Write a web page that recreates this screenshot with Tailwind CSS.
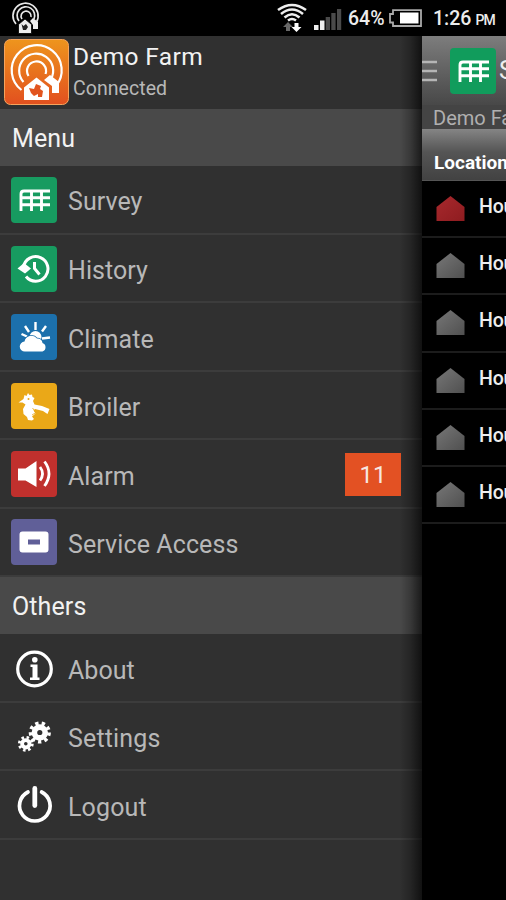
<!DOCTYPE html>
<html lang="en">
<head>
<meta charset="utf-8">
<title>Demo Farm</title>
<script src="https://cdn.jsdelivr.net/npm/@tailwindcss/browser@4"></script>
</head>
<body class="bg-black">
<svg width="0" height="0" class="absolute">
  <defs>
    <linearGradient id="or" x1="0" y1="0" x2="0" y2="1"><stop offset="0" stop-color="#ee951d"/><stop offset="1" stop-color="#e2501f"/></linearGradient>
    <linearGradient id="gy" x1="0" y1="0" x2="1" y2="1"><stop offset="0" stop-color="#777"/><stop offset="1" stop-color="#505050"/></linearGradient>
    <linearGradient id="rd" x1="0" y1="0" x2="1" y2="1"><stop offset="0" stop-color="#a8292d"/><stop offset="1" stop-color="#8e1c20"/></linearGradient>
    <symbol id="grid" viewBox="0 0 46 46"><path d="M10 34V17q0-3 3-3H39M10 20.800H39M10 27.800H39M20.500 14V34M30.500 14V34" fill="none" stroke="#fff" stroke-width="2.900"/></symbol>
    <symbol id="house" viewBox="0 0 28 25"><path d="M14 0L28 11V25H0V11Z"/></symbol>
  </defs>
</svg>
<div class="w-[506px] h-[900px] overflow-hidden bg-black flex flex-col font-['Roboto','Liberation_Sans',sans-serif]">
  <header class="h-[36px] shrink-0 flex items-center text-[#ececec]">
    <svg class="ml-[11px] w-[30px] h-[36px]" viewBox="0 0 30 36" fill="none" stroke="#e8e8e8">
      <path d="M5 24A12.600 12.600 0 1 1 25.500 22M8 21A8.800 8.800 0 1 1 23 19M11 19A5 5 0 1 1 20 17" stroke-width="1.700"/>
      <path d="M19 21L22 18 27 22V29H22V25Z" fill="#eee" stroke="none"/>
      <path d="M7.500 24.500L14 19 20.500 24.500V33.500H7.500Z" fill="#eee" stroke="#000" stroke-width=".8"/>
      <path d="M10.500 24L12.500 26 15 24 17 27 15 30H12Z" fill="#222" stroke="none"/>
    </svg>
    <svg class="ml-[235px] w-[32px] h-[36px]" viewBox="0 0 32 36" fill="none" stroke="#eee" stroke-width="2.600">
      <path d="M2 10Q16 0 30 10M5 14Q16 5 27 14M8.500 17.500Q16 11 23.500 17.500M12 20.500Q16 17.500 20 20.500"/>
      <path d="M12 22L17 27H14V31H10V27H7Z" fill="#686868" stroke="none"/>
      <path d="M20.500 32L15.500 27H18.500V23H22.500V27H25.500Z" fill="#fff" stroke="none"/>
    </svg>
    <svg class="ml-[4px] w-[30px] h-[36px]" viewBox="0 0 30 36"><path d="M2 25h4.500v5H2zM8 20.500h4.500V30H8z" fill="#f0f0f0"/><path d="M13.700 17h4.300v13h-4.300zM19.300 13h4.300v17h-4.300zM25 9h4.200v21H25z" fill="#4a4a4a"/></svg>
    <span class="ml-[6px] pt-[2px] w-[38px] whitespace-nowrap text-[19.500px] font-medium">64%</span>
    <svg class="ml-[1px] w-[36px] h-[36px]" viewBox="0 0 36 36"><path d="M6 10.200H34V26H6V22.500H3V14H6Z" fill="none" stroke="#aaa" stroke-width="1.800"/><rect x="13" y="12.500" width="18.500" height="11" fill="#fff"/></svg>
    <span class="ml-[10px] pt-[2px] whitespace-nowrap text-[19.500px] font-medium">1:26<span class="ml-[4px] text-[14px] tracking-[-.8px]">PM</span></span>
  </header>
  <div class="flex flex-1 min-h-0">
    <aside class="relative w-[422px] shrink-0 bg-[#303030] text-[25px] tracking-[.05px] text-[#b8b8b8]">
      <div class="h-[73px] flex items-start pl-[4px]">
        <svg class="mt-[3px] w-[65px] h-[66px] shrink-0" viewBox="0 0 65 66" fill="none" stroke="#fff">
          <rect x=".5" y=".5" width="64" height="65" rx="6" fill="url(#or)" stroke="#f6a35c"/>
          <path d="M17.500 51A25 25 0 1 1 52 47M19.500 43A17 17 0 1 1 47 40M24.500 37A9.500 9.500 0 1 1 41.500 35" stroke-width="2.200"/>
          <path d="M40 41L46 36 55 43V54H48V47Z" fill="#fff" stroke="none"/>
          <path d="M20 48.500L32.500 38.500 45 48.500V61H20Z" fill="#fff" stroke="none"/>
          <path d="M25 49L30 50 32 45 37 47 36 50 39 52 38 58H34V55L30 57 27 54Z" fill="#e2551f" stroke="none"/>
        </svg>
        <div class="ml-[4px] flex flex-col">
          <span class="mt-[5px] h-[32px] leading-[32px] text-[24.500px] tracking-[.35px] text-[#f2f2f2]">Demo Farm</span>
          <span class="h-[30px] leading-[32px] text-[19.500px] tracking-[.05px]">Connected</span>
        </div>
      </div>
      <h2 class="h-[57px] bg-[#494949] pl-[12px] leading-[60px] tracking-[.1px] text-[#f2f2f2]">Menu</h2>
      <nav>
        <div class="h-[68.500px] flex items-center gap-[11px] pl-[11px] pt-[1px] border-b-2 border-[#3c3c3c]">
          <svg class="w-[46px] h-[46px] rounded-[4px] bg-[#179b60]"><use href="#grid"/></svg><span class="pt-[4px]">Survey</span>
        </div>
        <div class="h-[68.500px] flex items-center gap-[11px] pl-[11px] pt-[2px] border-b-2 border-[#3c3c3c]">
          <svg class="w-[46px] h-[46px] rounded-[4px] bg-[#179b60]" viewBox="0 0 46 46" fill="none" stroke="#fff" stroke-width="3"><path d="M12.500 21A12.300 12.300 0 1 1 15 30.500"/><path d="M6.500 22.500L13 17 20 22.500 14 27.500Z" fill="#fff" stroke="none"/><path d="M23.500 16V22.500L28.500 28.500"/></svg><span class="pt-[4px]">History</span>
        </div>
        <div class="h-[68.500px] flex items-center gap-[11px] pl-[11px] pt-[2px] border-b-2 border-[#3c3c3c]">
          <svg class="w-[46px] h-[46px] rounded-[4px] bg-[#1c70ac]" viewBox="0 0 46 46"><path d="M24.500 8V16M14 12L18 18M35 12L31 17.500M10.500 20L16 22.500M31 24.500L39 23.500" stroke="#fff" stroke-width="2.400"/><circle cx="24.500" cy="23" r="6" fill="#fff"/><path d="M14 37.500a5 5 0 0 1-.5-10 7 7 0 0 1 12.500-3 5 5 0 0 1 5.500 4.500 4.500 4.500 0 0 1 0 8.500Z" fill="#fff" stroke="#1c70ac" stroke-width="1.300" paint-order="stroke"/></svg><span class="pt-[4px]">Climate</span>
        </div>
        <div class="h-[68.500px] flex items-center gap-[11px] pl-[11px] pt-[2px] border-b-2 border-[#3c3c3c]">
          <svg class="w-[46px] h-[46px] rounded-[4px] bg-[#eaa818]" viewBox="0 0 46 46"><path d="M7.500 19.500L12.500 16 13.500 12 15.500 13 17 10 18.500 12 21 11.500 21.500 14 23.500 15 22 18 23.500 21.500 31 23 38.500 26 36.500 31 32 28 24 26 22.500 27.500 24.500 30.500 21 33.500 23 36 21 37.500 17 37 16 34 12.500 31 12 26 14.500 21.500 11.500 19.500Z" fill="#fff"/><path d="M21.500 25L25 29.500 21 32" fill="none" stroke="#eaa818" stroke-width=".8"/><circle cx="17.500" cy="16" r="1" fill="#eaa818"/></svg><span class="pt-[4px]">Broiler</span>
        </div>
        <div class="h-[68.500px] flex items-center gap-[11px] pl-[11px] pt-[2px] border-b-2 border-[#3c3c3c]">
          <svg class="w-[46px] h-[46px] rounded-[4px] bg-[#c0302d]" viewBox="0 0 46 46"><path d="M7 17.500H14.500L25.500 10V36L14.500 29.500H7Z" fill="#fff"/><path d="M29 16Q34 22.500 29 29.500M33.500 10.500Q42.500 22.500 33.500 35" fill="none" stroke="#fff" stroke-width="2.800"/></svg><span class="pt-[4px]">Alarm</span>
          <span class="ml-auto mr-[21px] w-[56px] h-[43px] bg-[#e35123] text-center leading-[45px] text-[24px] text-[#f6e6e0]">11</span>
        </div>
        <div class="h-[68.500px] flex items-center gap-[11px] pl-[11px] pt-[1px] border-b-2 border-[#3c3c3c]">
          <svg class="w-[46px] h-[46px] rounded-[4px] bg-[#605f98]" viewBox="0 0 46 46"><path fill-rule="evenodd" d="M11.500 12.500h23a3 3 0 0 1 3 3v15a3 3 0 0 1-3 3h-23a3 3 0 0 1-3-3v-15a3 3 0 0 1 3-3ZM17 20.500h12v5H17Z" fill="#fff"/></svg><span class="pt-[4px] tracking-[.1px]">Service Access</span>
        </div>
      </nav>
      <h2 class="h-[57px] bg-[#494949] pl-[12px] leading-[60px] tracking-[.1px] text-[#f2f2f2]">Others</h2>
      <nav>
        <div class="h-[68.500px] flex items-center gap-[11px] pl-[11px] pt-[2px] border-b-2 border-[#3c3c3c]">
          <svg class="w-[46px] h-[46px]" viewBox="0 0 46 46"><circle cx="23.500" cy="24" r="16.800" fill="none" stroke="#fff" stroke-width="3.200"/><circle cx="23.800" cy="14.800" r="2.800" fill="#fff"/><path d="M19.500 19.500H26.500V32.500H28.500V35H19V32.500H21.500V22H19.500Z" fill="#fff"/></svg><span class="pt-[4px]">About</span>
        </div>
        <div class="h-[68.500px] flex items-center gap-[11px] pl-[11px] pt-[2px] border-b-2 border-[#3c3c3c]">
          <svg class="w-[46px] h-[46px]" viewBox="0 0 46 46" fill="none" stroke="#fff"><circle cx="28.800" cy="18.500" r="5.400" stroke-width="5.600"/><circle cx="28.800" cy="18.500" r="9.300" stroke-width="3.600" stroke-dasharray="3.300 3.190"/><circle cx="14.800" cy="29.800" r="3.700" stroke-width="3.800"/><circle cx="14.800" cy="29.800" r="6.500" stroke-width="2.800" stroke-dasharray="2.500 2.605"/></svg><span class="pt-[4px] tracking-[.15px]">Settings</span>
        </div>
        <div class="h-[68.500px] flex items-center gap-[11px] pl-[11px] pt-[2px] border-b-2 border-[#3c3c3c]">
          <svg class="w-[46px] h-[46px]" viewBox="0 0 46 46" fill="none" stroke="#fff"><path d="M17 10A15.300 15.300 0 1 0 30.600 10" stroke-width="3.700" stroke-linecap="round"/><path d="M23.800 6.500V23.500" stroke-width="4.800" stroke-linecap="round"/></svg><span class="pt-[4px] tracking-[.15px]">Logout</span>
        </div>
      </nav>
      <div class="absolute top-0 right-0 w-[22px] h-full bg-linear-to-r from-black/0 via-black/25 to-black/65"></div>
    </aside>
    <main class="w-[84px] shrink-0 overflow-hidden whitespace-nowrap text-[#eee]">
      <div class="h-[69px] flex items-center bg-linear-to-b from-[#7d7d7d] to-[#484848]">
        <svg class="w-[15px] h-[22px] shrink-0" viewBox="0 0 15 22"><path d="M0 2H15M0 11H15M0 20H15" stroke="#b5b5b5" stroke-width="2.500"/></svg>
        <svg class="ml-[13px] w-[46px] h-[46px] shrink-0 rounded-[4px] bg-[#119c5c]"><use href="#grid"/></svg>
        <span class="ml-[3px] text-[25px]">Survey</span>
      </div>
      <div class="h-[24px] bg-[#444] pl-[11px] leading-[26px] text-[20px] text-[#b0b0b0]">Demo Farm</div>
      <div class="h-[52px] bg-linear-to-b from-[#858585] via-[#555] via-45% to-[#424242] border-b border-[#555] pl-[12px] pt-[7px] leading-[53px] text-[19px] font-bold text-white">Location</div>
      <ul class="text-[19.500px] tracking-[-.2px] font-medium">
        <li class="h-[57.200px] border-b-2 border-[#1c1c1c] flex items-center gap-[14px] pl-[14px]"><svg class="w-[29px] h-[25px] shrink-0" fill="url(#rd)"><use href="#house"/></svg><span class="pb-[4px]">House 1</span></li>
        <li class="h-[57.200px] border-b-2 border-[#1c1c1c] flex items-center gap-[14px] pl-[14px]"><svg class="w-[29px] h-[25px] shrink-0" fill="url(#gy)"><use href="#house"/></svg><span class="pb-[4px]">House 2</span></li>
        <li class="h-[57.200px] border-b-2 border-[#1c1c1c] flex items-center gap-[14px] pl-[14px]"><svg class="w-[29px] h-[25px] shrink-0" fill="url(#gy)"><use href="#house"/></svg><span class="pb-[4px]">House 3</span></li>
        <li class="h-[57.200px] border-b-2 border-[#1c1c1c] flex items-center gap-[14px] pl-[14px]"><svg class="w-[29px] h-[25px] shrink-0" fill="url(#gy)"><use href="#house"/></svg><span class="pb-[4px]">House 4</span></li>
        <li class="h-[57.200px] border-b-2 border-[#1c1c1c] flex items-center gap-[14px] pl-[14px]"><svg class="w-[29px] h-[25px] shrink-0" fill="url(#gy)"><use href="#house"/></svg><span class="pb-[4px]">House 5</span></li>
        <li class="h-[57.200px] border-b-2 border-[#1c1c1c] flex items-center gap-[14px] pl-[14px]"><svg class="w-[29px] h-[25px] shrink-0" fill="url(#gy)"><use href="#house"/></svg><span class="pb-[4px]">House 6</span></li>
      </ul>
    </main>
  </div>
</div>
</body>
</html>
